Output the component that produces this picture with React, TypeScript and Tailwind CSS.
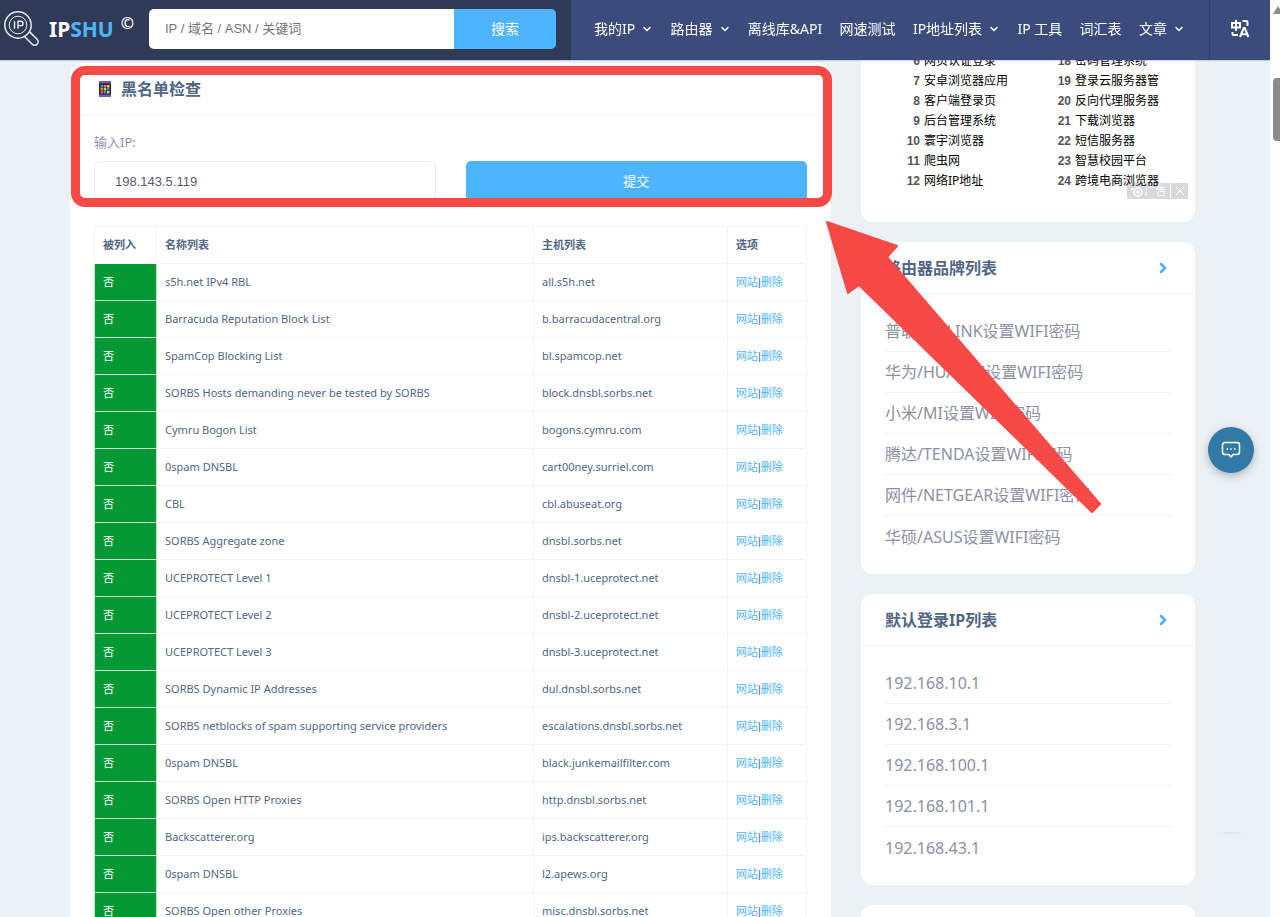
import { ChevronDown, ChevronRight } from 'lucide-react'

const navItems = [
  { label: '我的IP', menu: true },
  { label: '路由器', menu: true },
  { label: '离线库&API', menu: false },
  { label: '网速测试', menu: false },
  { label: 'IP地址列表', menu: true },
  { label: 'IP 工具', menu: false },
  { label: '词汇表', menu: false },
  { label: '文章', menu: true },
]

const blacklists = [
  { name: 's5h.net IPv4 RBL', host: 'all.s5h.net' },
  { name: 'Barracuda Reputation Block List', host: 'b.barracudacentral.org' },
  { name: 'SpamCop Blocking List', host: 'bl.spamcop.net' },
  { name: 'SORBS Hosts demanding never be tested by SORBS', host: 'block.dnsbl.sorbs.net' },
  { name: 'Cymru Bogon List', host: 'bogons.cymru.com' },
  { name: '0spam DNSBL', host: 'cart00ney.surriel.com' },
  { name: 'CBL', host: 'cbl.abuseat.org' },
  { name: 'SORBS Aggregate zone', host: 'dnsbl.sorbs.net' },
  { name: 'UCEPROTECT Level 1', host: 'dnsbl-1.uceprotect.net' },
  { name: 'UCEPROTECT Level 2', host: 'dnsbl-2.uceprotect.net' },
  { name: 'UCEPROTECT Level 3', host: 'dnsbl-3.uceprotect.net' },
  { name: 'SORBS Dynamic IP Addresses', host: 'dul.dnsbl.sorbs.net' },
  { name: 'SORBS netblocks of spam supporting service providers', host: 'escalations.dnsbl.sorbs.net' },
  { name: '0spam DNSBL', host: 'black.junkemailfilter.com' },
  { name: 'SORBS Open HTTP Proxies', host: 'http.dnsbl.sorbs.net' },
  { name: 'Backscatterer.org', host: 'ips.backscatterer.org' },
  { name: '0spam DNSBL', host: 'l2.apews.org' },
  { name: 'SORBS Open other Proxies', host: 'misc.dnsbl.sorbs.net' },
]

const adColumns = [
  { start: 6, items: ['网页认证登录', '安卓浏览器应用', '客户端登录页', '后台管理系统', '寰宇浏览器', '爬虫网', '网络IP地址'] },
  { start: 18, items: ['密码管理系统', '登录云服务器管', '反向代理服务器', '下载浏览器', '短信服务器', '智慧校园平台', '跨境电商浏览器'] },
]

const routerBrands = [
  '普联/TP-LINK设置WIFI密码',
  '华为/HUAWEI设置WIFI密码',
  '小米/MI设置WIFI密码',
  '腾达/TENDA设置WIFI密码',
  '网件/NETGEAR设置WIFI密码',
  '华硕/ASUS设置WIFI密码',
]

const loginIps = ['192.168.10.1', '192.168.3.1', '192.168.100.1', '192.168.101.1', '192.168.43.1']

function LogoIcon() {
  return (
    <svg viewBox="0 0 38 38" className="size-[38px] shrink-0" fill="none" stroke="#e8edf5" strokeWidth="1.5">
      <circle cx="14" cy="15" r="13.2" />
      <circle cx="14" cy="15" r="8.8" strokeWidth="1" />
      <path d="M10.5 11.2v7.600M14 18.800v-7.600h2.800a2.200 2.200 0 0 1 0 4.400H14" strokeWidth="1.4" />
      <path d="M20.500 26.500l7.700 7.700a3.400 3.400 0 0 0 4.900-4.900l-7.700-7.700" strokeLinejoin="round" />
    </svg>
  )
}

function TranslateIcon() {
  return (
    <svg viewBox="0 0 20 20" className="size-5" fill="none" stroke="#fff" strokeWidth="2">
      <path d="M2 4h8v4.600H2zM6 1v11" />
      <path d="M12.500 2H16a1.500 1.500 0 0 1 1.500 1.500V7" />
      <path d="M2.500 13v1.500A1.500 1.500 0 0 0 4 16h4" />
      <path d="M10 18l3.700-9h1l3.700 9M11.500 15.200h5.400" />
    </svg>
  )
}

function TileIcon() {
  return (
    <svg viewBox="0 0 12 16" className="h-4 w-3">
      <rect width="12" height="16" rx="1" fill="#2c2145" />
      <rect width="12" height="2.500" rx="1" fill="#6d5bb0" />
      <rect y="13.500" width="12" height="2.500" rx="1" fill="#6d5bb0" />
      <rect x="1.500" y="4" width="2.500" height="2.500" fill="#2196e8" />
      <rect x="4.750" y="4" width="2.500" height="2.500" fill="#f28b1d" />
      <rect x="8" y="4" width="2.500" height="2.500" fill="#ffcf3a" />
      <rect x="1.500" y="7" width="2.500" height="2.500" fill="#f28b1d" />
      <rect x="4.750" y="7" width="2.500" height="2.500" fill="#ffcf3a" />
      <rect x="8" y="7" width="2.500" height="2.500" fill="#2196e8" />
      <rect x="1.500" y="10" width="2.500" height="2.500" fill="#f05a28" />
      <rect x="4.750" y="10" width="2.500" height="2.500" fill="#2196e8" />
      <rect x="8" y="10" width="2.500" height="2.500" fill="#ffcf3a" />
    </svg>
  )
}

function Header() {
  return (
    <header className="sticky top-0 z-20 flex h-[60px] bg-[#3a4b7c] shadow-[0_1px_1px_rgba(58,75,124,0.2)]">
      <div className="flex w-[571px] shrink-0 items-center bg-[#2f3a56] pr-[15px] pb-[2px] pl-1">
        <a href="#" className="flex items-center">
          <LogoIcon />
          <span className="ml-[7px] text-[21px] leading-6 font-bold text-white">
            IP<span className="text-[#4db5ff]">SHU</span>
          </span>
          <span className="mb-3 ml-[7px] text-base leading-5 font-semibold text-white">©</span>
        </a>
        <form className="ml-auto flex h-10 w-[407px] overflow-hidden rounded-[5px]">
          <input
            type="text"
            aria-label="搜索"
            placeholder="IP / 域名 / ASN / 关键词"
            className="min-w-0 flex-1 bg-white px-4 font-['Liberation_Sans','Noto_Sans_CJK_SC',sans-serif] text-[13px] placeholder:text-[#757575]"
          />
          <button type="button" className="w-[102px] bg-[#4db5ff] text-sm text-white">
            搜索
          </button>
        </form>
      </div>
      <nav className="flex min-w-0 flex-1 items-center justify-between pr-6 pb-[2px] pl-[23px] text-sm whitespace-nowrap text-white">
        {navItems.map((item) => (
          <a key={item.label} href="#" className="flex items-center gap-[6px]">
            {item.label}
            {item.menu && <ChevronDown size={12} strokeWidth={3} />}
          </a>
        ))}
      </nav>
      <button
        type="button"
        aria-label="Language"
        className="flex w-[61px] shrink-0 items-center justify-center border-l border-[#2f3f6c] pb-[2px]"
      >
        <TranslateIcon />
      </button>
    </header>
  )
}

function BlacklistCard() {
  return (
    <section className="relative rounded-t-xl bg-white">
      <h2 className="flex h-[53px] items-center gap-[10px] border-b border-[#f0f3f6] px-[29px] text-base font-bold text-[#506684]">
        <TileIcon />
        黑名单检查
      </h2>
      <form className="grid grid-cols-2 items-end gap-x-[30px] px-6 pt-4">
        <div>
          <label htmlFor="ip" className="block text-[13px] leading-5 text-[#8c92b0]">
            输入IP:
          </label>
          <input
            id="ip"
            type="text"
            defaultValue="198.143.5.119"
            className="mt-[9px] h-[41px] w-full rounded-[5px] border border-[#ebeef2] px-5 font-['Liberation_Sans',sans-serif] text-[13px] text-[#5c5776]"
          />
        </div>
        <button type="button" className="h-[41px] rounded-[5px] bg-[#4db5ff] text-[13px] text-white">
          提交
        </button>
      </form>
      <div className="px-6 pt-6">
        <table className="w-full table-fixed border-collapse text-left text-[11px] text-[#506684]">
          <thead>
            <tr className="h-[37px]">
              <th className="w-[62px] border border-[#f1f4f8] px-2 font-bold">被列入</th>
              <th className="border border-[#f1f4f8] px-2 font-bold">名称列表</th>
              <th className="w-[194px] border border-[#f1f4f8] px-2 font-bold">主机列表</th>
              <th className="w-[79px] border border-[#f1f4f8] px-2 font-bold">选项</th>
            </tr>
          </thead>
          <tbody>
            {blacklists.map((row) => (
              <tr key={row.host} className="h-[37px]">
                <td className="border border-[#c5e5ce] bg-[#059935] px-2 text-white">否</td>
                <td className="border border-[#f1f4f8] px-2">{row.name}</td>
                <td className="border border-[#f1f4f8] px-2">{row.host}</td>
                <td className="border border-[#f1f4f8] px-2 font-['Liberation_Sans','Noto_Sans_CJK_SC',sans-serif]">
                  <a href="#" className="text-[#4db5ff]">网站</a>|<a href="#" className="text-[#4db5ff]">删除</a>
                </td>
              </tr>
            ))}
          </tbody>
        </table>
      </div>
      {/* Highlight frame */}
      <div className="pointer-events-none absolute top-[3px] -right-px left-px h-[141px] rounded-[14px] border-[9px] border-[#f74a47]" />
    </section>
  )
}

function AdCard() {
  return (
    <section className="relative h-[172px] rounded-b-xl bg-white pt-px pl-[43px] text-xs">
      <div className="grid grid-cols-[151px_auto]">
        {adColumns.map((column) => (
          <ol key={column.start}>
            {column.items.map((item, i) => (
              <li key={item} className="flex h-5 items-center gap-1 whitespace-nowrap">
                <span className="w-4 text-right font-['Liberation_Sans',sans-serif] font-bold text-[#555]">
                  {column.start + i}
                </span>
                <a href="#" className="text-black">{item}</a>
              </li>
            ))}
          </ol>
        ))}
      </div>
      <div className="absolute right-[7px] bottom-[23px] flex h-4 gap-px text-[11px] leading-4 text-white">
        <span className="flex w-[43px] items-center justify-center gap-[2px] bg-black/15">
          <svg viewBox="0 0 12 12" className="size-3" fill="none" stroke="#fff" strokeWidth="1.500">
            <circle cx="7" cy="7" r="4" />
            <circle cx="7" cy="7" r="1" fill="#fff" />
            <path d="M0 4h4" />
          </svg>
          广告
        </span>
        <button type="button" aria-label="关闭" className="flex w-[17px] items-center justify-center bg-black/15">
          <svg viewBox="0 0 8 8" className="size-2" stroke="#fff" strokeWidth="1">
            <path d="M0 0l8 8M8 0L0 8" />
          </svg>
        </button>
      </div>
    </section>
  )
}

function ListCard({ title, items }: { title: string; items: string[] }) {
  return (
    <section className="rounded-xl bg-white">
      <div className="flex h-[52px] items-center justify-between border-b border-[#f0f3f6] px-6">
        <h2 className="text-base font-bold text-[#506684]">{title}</h2>
        <a href="#" aria-label={title}>
          <ChevronRight size={16} strokeWidth={4} className="text-[#4db5ff]" />
        </a>
      </div>
      <ul className="px-6 py-[17px]">
        {items.map((item) => (
          <li key={item} className="flex h-[41px] items-center border-b border-[#f1f4f8] last:border-b-0">
            <a href="#" className="text-base text-[#8c90a4]">{item}</a>
          </li>
        ))}
      </ul>
    </section>
  )
}

function PointerArrow() {
  return (
    <svg viewBox="0 0 280 300" className="pointer-events-none absolute top-[169px] left-[822px] z-10 h-[300px] w-[280px]">
      <path
        d="M5 3L75 27L65 38L278 285L270 293L37 66L26 74Z"
        fill="#f74a47"
        stroke="#f74a47"
        strokeWidth="2"
        strokeLinejoin="round"
      />
    </svg>
  )
}

export default function App() {
  return (
    <div className="flex h-screen overflow-hidden bg-[#ebf1f5] font-['Noto_Sans','Noto_Sans_CJK_SC',sans-serif]">
      <div className="relative min-w-0 flex-1 overflow-hidden">
        <Header />
        <main className="relative -mt-[10px] grid grid-cols-[761fr_334fr] items-start gap-[30px] pr-[75px] pl-[70px]">
          <div className="pt-[13px]">
            <BlacklistCard />
          </div>
          <aside className="flex flex-col gap-5">
            <AdCard />
            <ListCard title="路由器品牌列表" items={routerBrands} />
            <ListCard title="默认登录IP列表" items={loginIps} />
            <section className="h-20 rounded-xl bg-white" />
          </aside>
          <PointerArrow />
        </main>
        <button
          type="button"
          aria-label="Chat"
          className="absolute right-4 bottom-[444px] z-10 flex size-[46px] items-center justify-center rounded-full bg-[#327aa5] shadow-[0_3px_8px_rgba(0,0,0,0.25)]"
        >
          <svg viewBox="0 0 20 18" className="h-[18px] w-5" fill="none" stroke="#fff" strokeWidth="1.500" strokeLinejoin="round">
            <path d="M4 1.500h12a2.500 2.500 0 0 1 2.500 2.500v7a2.500 2.500 0 0 1-2.500 2.500h-4l-2 2.500-2-2.500H4A2.500 2.500 0 0 1 1.500 11V4A2.500 2.500 0 0 1 4 1.500z" />
            <path d="M5.500 8h1.500M9.300 8h1.500M13 8h1.500" />
          </svg>
        </button>
        <div className="absolute right-6 bottom-[83px] h-[2px] w-8 bg-linear-to-r from-transparent via-black/5 to-transparent" />
      </div>
      {/* Scrollbar */}
      <div className="flex w-[10px] shrink-0 flex-col overflow-hidden bg-[#fcfcfc] pt-[6px] pl-[3px]">
        <svg viewBox="0 0 10 8" className="h-2 w-[10px] shrink-0" fill="#8b8b8b">
          <path d="M0 8L5 0l5 8z" />
        </svg>
        <div className="mt-16 h-[63px] w-[10px] shrink-0 rounded-[4px] bg-[#8b8b8b]" />
      </div>
    </div>
  )
}
